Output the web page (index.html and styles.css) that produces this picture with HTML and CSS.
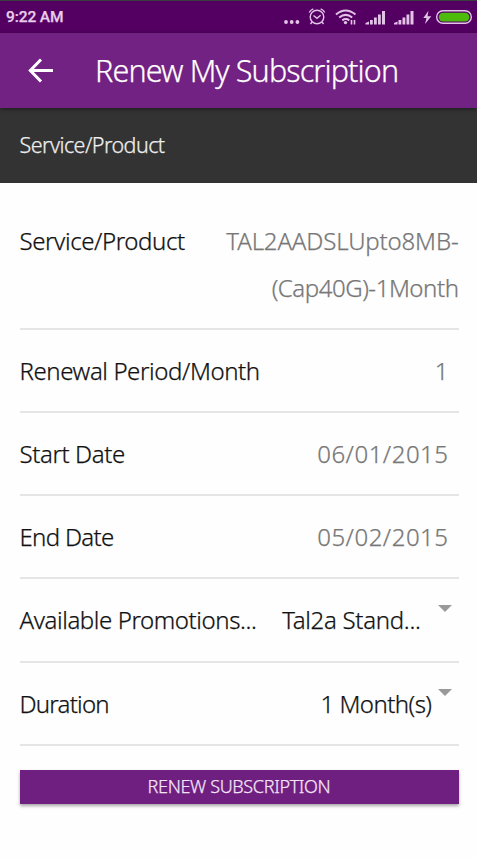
FILE: index.html
```
<!DOCTYPE html>
<html lang="en">
<head>
  <meta charset="UTF-8">
  <title>Renew My Subscription</title>
  <link rel="stylesheet" href="styles.css">
</head>
<body>
  <div class="status">
    <span class="time">9:22 AM</span>
    <svg class="status-icons" width="195" height="32" viewBox="0 0 195 32">
      <!-- more -->
      <g fill="#e3c4e8">
        <circle cx="6" cy="22" r="1.9"/>
        <circle cx="11.700" cy="22" r="1.900"/>
        <circle cx="17.400" cy="22" r="1.900"/>
      </g>
      <!-- alarm -->
      <g fill="none" stroke="#e3c4e8" stroke-width="1.400">
        <circle cx="37" cy="17" r="6.800"/>
        <path d="M33.500 15.500l3.500 2.800 3.600-3M29.300 12.500q1-2.500 4-3.700M44.700 12.500q-1-2.500-4-3.700M32 22l-1.500 2M42 22l1.500 2"/>
      </g>
      <!-- wifi -->
      <g fill="none" stroke="#e3c4e8" stroke-width="2.100">
        <path d="M56 14.500q9.500-8 19.500 0M59.200 17.500q6.500-5.200 13 0M62.300 20.300q3.500-2.500 7 0"/>
      </g>
      <circle cx="65.500" cy="22.600" r="1.700" fill="#e3c4e8"/>
      <path d="M71.500 20v4.500M74.500 20v4.500" stroke="#e3c4e8" stroke-width="1.600"/>
      <!-- signal -->
      <path d="M85.500 24.500v-1.500l3.500-1.500v3zM90 24.500v-4.500h2.800v4.500zM94 24.500v-7h2.800v7zM98 24.500v-10h2.800v10zM102 24.500v-13.500h3v13.500z" fill="#e3c4e8"/>
      <path d="M114 24.500v-1.500l3.500-1.500v3zM118.500 24.500v-4.500h2.800v4.500zM122.500 24.500v-7h2.800v7zM126.500 24.500v-10h2.800v10zM130.500 24.500v-13.500h3v13.500z" fill="#e3c4e8"/>
      <!-- battery -->
      <path d="M148.500 10.800l-5.200 7.200h3.200l-1.500 6 6.300-7.700h-3.800z" fill="#e3c4e8"/>
      <rect x="156.700" y="10.700" width="34.600" height="12.600" rx="6.300" fill="none" stroke="#e3c4e8" stroke-width="1.400"/>
      <rect x="158.800" y="12.800" width="30.600" height="8.600" rx="4.300" fill="#4dbb0c"/>
    </svg>
  </div>
  <header class="bar">
    <svg class="back" width="26" height="26" viewBox="0 0 26 26">
      <path d="M25 12.500H3M13 1.500L2.300 12.500l10.700 11" fill="none" stroke="#fff" stroke-width="3"/>
    </svg>
    <h1 class="title">Renew My Subscription</h1>
  </header>
  <h2 class="section">Service/Product</h2>
  <ul class="list">
    <li class="row">
      <span class="label">Service/Product</span>
      <span class="value product">TAL2AADSLUpto8MB-<br><span class="plan">(Cap40G)-1Month</span></span>
    </li>
    <li class="row">
      <span class="label period">Renewal Period/Month</span>
      <span class="value inset">1</span>
    </li>
    <li class="row">
      <span class="label start">Start Date</span>
      <span class="value inset date">06/01/2015</span>
    </li>
    <li class="row">
      <span class="label end">End Date</span>
      <span class="value inset date">05/02/2015</span>
    </li>
    <li class="row">
      <span class="label promo">Available Promotions...</span>
      <span class="select standard">Tal2a Stand...</span>
      <i class="arrow"></i>
    </li>
    <li class="row">
      <span class="label duration">Duration</span>
      <span class="select months">1 Month(s)</span>
      <i class="arrow"></i>
    </li>
  </ul>
  <button class="renew" type="button">RENEW SUBSCRIPTION</button>
</body>
</html>
```
FILE: styles.css
```
*{
  padding: 0;
  margin: 0;
  box-sizing: border-box;
}
body{
  height: 858px;
  overflow: hidden;
  background: #fefefe;
  font-family: "Noto Sans", sans-serif;
  font-weight: 300;
  color: #111;
  white-space: nowrap;
  -webkit-text-stroke: .25px;
}
.status{
  display: flex;
  justify-content: space-between;
  height: 33px;
  border-top: 1px solid #393c3c;
  background: #540062;
}
.time{
  padding-left: 6px;
  line-height: 32px;
  font-family: Roboto, sans-serif;
  font-size: 15.500px;
  font-weight: 500;
  letter-spacing: -.1px;
  color: #e9cdec;
}
.status-icons{
  margin: -1px 2px 0 0;
}
.bar{
  display: flex;
  align-items: center;
  position: relative;
  height: 75px;
  padding-left: 28px;
  background: #722283;
  box-shadow: 0 1px 4px rgba(0,0,0,.5);
  color: #fff;
}
.title{
  margin: -2px 0 0 41px;
  font-size: 30.500px;
  font-weight: 300;
  letter-spacing: -.88px;
}
.section{
  height: 75px;
  padding-left: 19.500px;
  background: #333;
  color: #eee;
  font-size: 21.500px;
  font-weight: 300;
  letter-spacing: -.55px;
  line-height: 74px;
}
.list{
  padding: 16.600px 18.500px 0 19.500px;
  list-style: none;
}
.row{
  display: flex;
  padding: 17px 0 17.200px;
  border-bottom: 2px solid #e5e5e5;
  font-size: 24px;
  line-height: 47px;
}
.label{
  letter-spacing: -.4px;
}
.end{
  letter-spacing: -.7px;
}
.duration{
  letter-spacing: -.75px;
}
.value{
  margin-left: auto;
  text-align: right;
  color: #777;
}
.product{
  letter-spacing: -.15px;
}
.plan{
  letter-spacing: -.45px;
}
.inset{
  padding-right: 10px;
}
.date{
  letter-spacing: .5px;
}
.select{
  margin-left: auto;
}
.standard{
  margin-right: 11px;
  letter-spacing: -.3px;
}
.months{
  letter-spacing: -.55px;
}
.arrow{
  width: 0;
  height: 0;
  margin: 9px 6.500px 0;
  border: 7px solid transparent;
  border-top-color: #999;
  border-bottom: 0;
}
.renew{
  display: block;
  width: 439px;
  height: 34px;
  margin: 24px 0 0 19.500px;
  border: 0;
  background: #6f1f80;
  box-shadow: 0 2px 3px rgba(0,0,0,.35);
  color: #f5e5f7;
  font: 300 18px/32px "Noto Sans", sans-serif;
  letter-spacing: -.35px;
  padding-bottom: 2px;
}
```
